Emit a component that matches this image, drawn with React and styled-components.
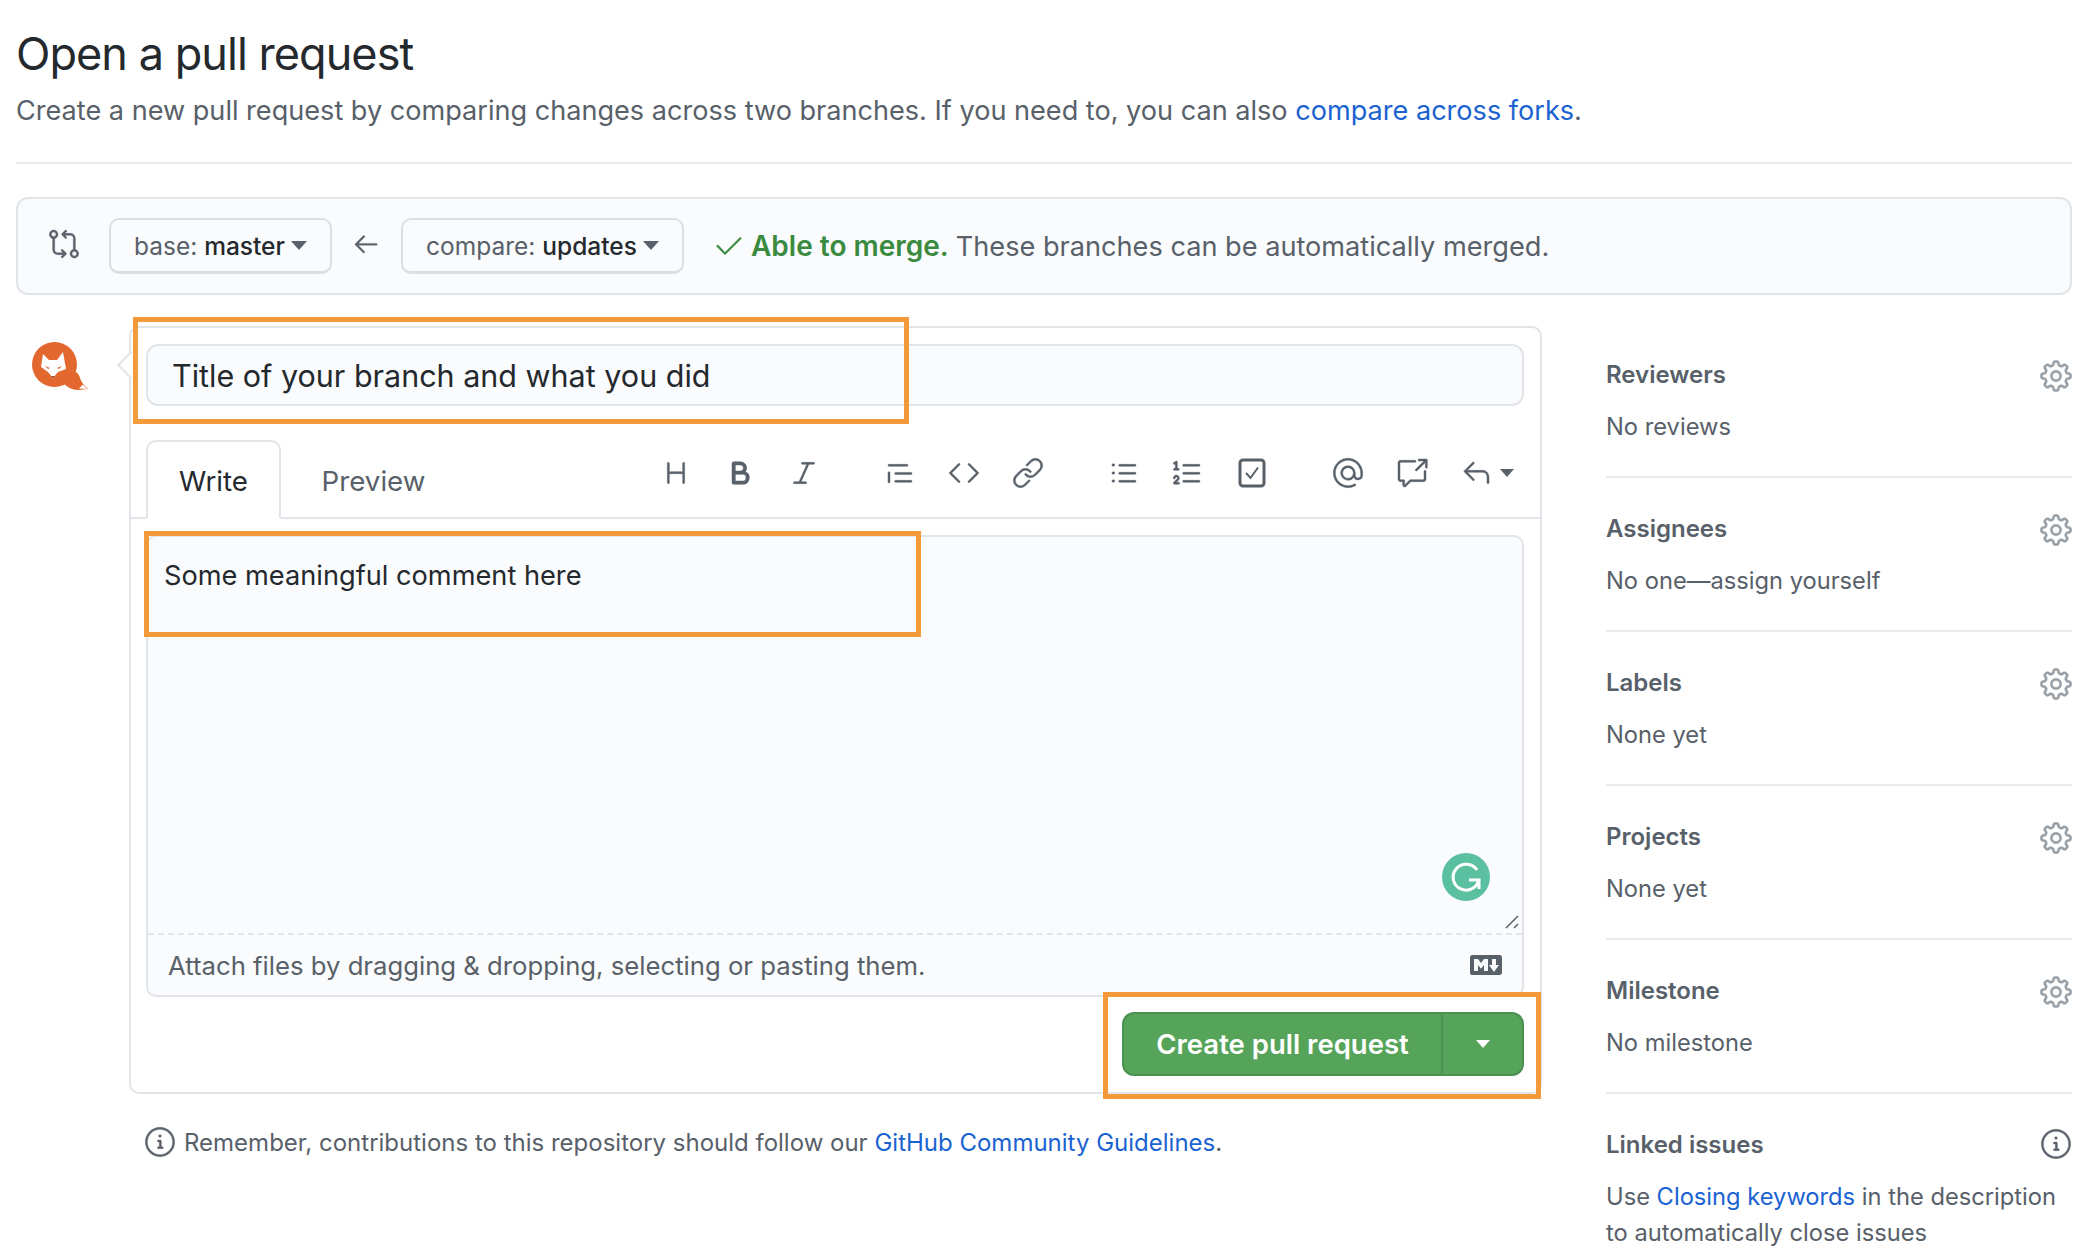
import React from "react";
import styled, { createGlobalStyle } from "styled-components";
import {
  GoHeading, GoBold, GoItalic, GoQuote, GoCode, GoLink, GoListUnordered, GoListOrdered,
  GoMention, GoCrossReference, GoReply, GoGear, GoInfo, GoGitCompare, GoCheck,
  GoArrowLeft,
} from "react-icons/go";

const Global = createGlobalStyle`
  html, body { margin: 0; padding: 0; background: #fff; }
  body { width: 2092px; height: 1256px; overflow: hidden; font-family: Inter, "Liberation Sans", sans-serif; color: #24292e; }
  * { box-sizing: border-box; }
`;
const Page = styled.div`position: relative; width: 2092px; height: 1256px; padding: 24px 20px 0 16px; overflow: hidden;`;
const Heading = styled.h1`margin: 0; font-size: 45px; line-height: 60px; font-weight: 400; letter-spacing: -0.95px; color: #24292e;`;
const Sub = styled.p`margin: 9px 0 0; font-size: 27.1px; line-height: 36px; color: #586069;`;
const A = styled.a`color: #1b62d1; text-decoration: none;`;
const Rule = styled.hr`margin: 33px 0 0; border: 0; height: 2px; background: #e8eaed;`;
const Bar = styled.div`
  margin-top: 33px; height: 98px; display: flex; align-items: center; padding: 0 0 0 30px;
  background: #fafbfc; border: 2px solid #e1e4e8; border-radius: 12px;
`;
const CompareIcon = styled(GoGitCompare)`font-size: 32px; color: #586069; margin-right: 29px; margin-top: -4px; stroke: currentColor; stroke-width: .3;`;
const Branch = styled.div`
  height: 56px; width: ${p => p.$w}px; display: flex; align-items: center; justify-content: center; gap: 6px;
  border: 2px solid #dcdfe3; border-bottom-width: 3px; border-radius: 10px; background: #fafbfc;
  font-size: 24.5px; color: #586069; white-space: nowrap;
  b { font-weight: 500; color: #24292e; }
`;
const Caret = styled.span`
  display: inline-block; width: 0; height: 0; margin-left: ${p => p.$ml ?? 0}px;
  border-left: ${p => p.$s}px solid transparent; border-right: ${p => p.$s}px solid transparent;
  border-top: ${p => p.$s + 1}px solid ${p => p.$c};
`;
const Arrow = styled(GoArrowLeft)`font-size: 30px; color: #586069; margin: -4px 20px 0 19px; stroke: currentColor; stroke-width: .3;`;
const Merge = styled.div`margin-left: 29px; display: flex; align-items: center; font-size: 27.15px; color: #586069; white-space: nowrap;`;
const MergeCheck = styled(GoCheck)`font-size: 32px; color: #3a8a3f; margin-right: 6px; stroke: currentColor; stroke-width: .2;`;
const Able = styled.b`font-weight: 600; font-size: 28px; color: #3a8a3f; margin-right: 7px;`;
const Main = styled.div`margin-top: 31px; display: flex; align-items: flex-start;`;
const AvatarCol = styled.div`width: 113px; flex: none; padding: 15px 0 0 15px;`;
const Form = styled.div`
  position: relative; width: 1413px; height: 768px; flex: none; border: 2px solid #e1e4e8; border-radius: 10px; padding: 16px 16px 0 15px; background: #fff;
  &::before { content: ""; position: absolute; left: -10px; top: 27px; width: 18px; height: 18px; background: #fff; border-left: 2px solid #e1e4e8; border-bottom: 2px solid #e1e4e8; transform: rotate(45deg); }
`;
const TitleBox = styled.div`
  position: relative; height: 62px; border: 2px solid #e1e4e8; border-radius: 12px; background: #fafbfc; padding: 0 24px;
  font-size: 30.5px; line-height: 60px; color: #24292e;
`;
const TabRow = styled.div`
  display: flex; align-items: flex-end; height: 87px; margin: 26px -16px 0 -15px; padding: 0 16px 0 15px; border-bottom: 2px solid #e1e4e8;
  position: relative;
`;
const Tab = styled.div`
  flex: none; width: ${p => p.$w}px; height: 79px; padding-top: 3px; display: flex; align-items: center; justify-content: center; font-size: 27.7px; margin-bottom: -2px;
  color: ${p => p.$active ? "#24292e" : "#586069"};
  ${p => p.$active ? "border: 2px solid #e1e4e8; border-bottom-color: #fff; border-radius: 10px 10px 0 0; background: #fff;" : ""}
`;
const Tools = styled.div`
  flex: 1; display: flex; align-self: flex-start; padding: 14px 0 0 194px; align-items: center; height: 68px; color: #586069; font-size: 32px;
  svg { stroke: currentColor; stroke-width: .35; flex: none; }
`;
const ToolGroup = styled.div`display: flex; gap: 32px; margin-right: ${p => p.$mr ?? 64}px; align-items: center;`;
const ReplyCaret = styled(Caret)`margin-left: -24px;`;
const Editor = styled.div`
  position: relative; margin-top: 16px; height: 462px; display: flex; flex-direction: column; border: 2px solid #e1e4e8; border-radius: 10px; background: #fafbfc;
`;
const TextArea = styled.div`flex: 1; padding: 21px 16px; font-size: 27.2px; line-height: 36px; color: #24292e; position: relative; border-bottom: 2px dashed #e1e4e8;`;
const EditorFoot = styled.div`height: 60px; display: flex; align-items: center; justify-content: space-between; padding: 0 20px 0 20px; font-size: 25.7px; color: #586069;`;
const Grammarly = styled.svg`position: absolute; right: 32px; top: 316px; width: 48px; height: 48px;`;
const Resize = styled.svg`position: absolute; right: 3px; bottom: 4px; width: 14px; height: 14px;`;
const Actions = styled.div`display: flex; justify-content: flex-end; margin-top: 15px;`;
const SplitButton = styled.div`display: flex; height: 64px; width: 402px; background: #55a45a; border: 2px solid #4b9150; border-radius: 12px; color: #fff; font-size: 27.5px; font-weight: 600;`;
const ButtonMain = styled.div`width: 319px; display: flex; align-items: center; justify-content: center; border-right: 2px solid #4b9150;`;
const ButtonCaret = styled.div`flex: 1; display: flex; align-items: center; justify-content: center;`;
const Note = styled.div`margin: 32px 0 0 15px; display: flex; align-items: center; gap: 8px; font-size: 24px; color: #586069; white-space: nowrap;`;
const NoteIcon = styled(GoInfo)`font-size: 32px; color: #586069; stroke: currentColor; stroke-width: .3;`;
const Aside = styled.aside`width: 466px; margin-left: 64px; flex: none; margin-top: -2px;`;
const Section = styled.div`padding: 34px 0 ${p => p.$last ? 0 : 31}px; border-bottom: ${p => p.$last ? "none" : "2px solid #e8eaed"};`;
const SecHead = styled.div`display: flex; align-items: center; justify-content: space-between; height: 32px; font-size: 24px; font-weight: 600; color: #586069;`;
const SecGear = styled(GoGear)`font-size: 34px; color: #959da5; margin: 3px -1px 0 0; stroke: currentColor; stroke-width: .35;`;
const SecInfo = styled(GoInfo)`font-size: 32px; color: #586069; stroke: currentColor; stroke-width: .3;`;
const SecBody = styled.div`margin-top: 19px; font-size: 23.7px; line-height: 36px; color: #586069;`;
const Highlight = styled.div`
  position: absolute; left: ${p => p.$x}px; top: ${p => p.$y}px; width: ${p => p.$w}px; height: ${p => p.$h}px;
  border: 5px solid #f59a3a; pointer-events: none;
`;
const FoxSvg = styled.svg`display: block; width: 60px; height: 52px; overflow: visible;`;

const Fox = () => (
  <FoxSvg viewBox="0 0 60 52">
    <circle cx="23.5" cy="23.5" r="22.5" fill="#e2682f" />
    <path d="M10 26 L12 13 L18 19 L26 19 L32 11 L35 28 L27 31 L22 37 L17 31 Z" fill="#fff" />
    <path d="M14 25 l5 2 l-2 1z M31 25 l-5 2 l2 1z" fill="#e2682f" />
    <path d="M20.5 35 h3 l-1.5 2z" fill="#7a3a20" />
    <path d="M29 31 C38 27 47 29 49 37 C50 41 53 44 57 48 L48 49 C42 49 38 47 34 44 Z" fill="#e2682f" />
    <path d="M48 47.5 L52 43.5 L56 48 Z" fill="#fff" />
  </FoxSvg>
);

const MarkdownIcon = () => (
  <svg width="32" height="32" viewBox="0 0 16 16" fill="currentColor">
    <path d="M14.85 3H1.15C.52 3 0 3.52 0 4.15v7.69C0 12.48.52 13 1.15 13h13.69c.64 0 1.15-.52 1.15-1.15v-7.7C16 3.52 15.48 3 14.85 3zM9 11H7V8L5.5 9.92 4 8v3H2V5h2l1.5 2L7 5h2v6zm2.99.5L9.5 8H11V5h2v3h1.5l-2.51 3.5z" />
  </svg>
);

const TaskIcon = () => (
  <svg width="32" height="32" viewBox="0 0 32 32" fill="none">
    <rect x="4" y="3" width="24" height="26" rx="3" stroke="#586069" strokeWidth="3" />
    <path d="M10 16 L14.5 21 L22 10.5" stroke="#586069" strokeWidth="2" />
  </svg>
);

const sections = [
  ["Reviewers", "No reviews"],
  ["Assignees", "No one—assign yourself"],
  ["Labels", "None yet"],
  ["Projects", "None yet"],
  ["Milestone", "No milestone"],
];

export default function App() {
  return (
    <Page>
      <Global />
      <Heading>Open a pull request</Heading>
      <Sub>Create a new pull request by comparing changes across two branches. If you need to, you can also <A>compare across forks</A>.</Sub>
      <Rule />
      <Bar>
        <CompareIcon />
        <Branch $w={223}><span>base: <b>master</b></span><Caret $s={8} $c="#586069" /></Branch>
        <Arrow />
        <Branch $w={283}><span>compare: <b>updates</b></span><Caret $s={8} $c="#586069" /></Branch>
        <Merge><MergeCheck /><Able>Able to merge.</Able> These branches can be automatically merged.</Merge>
      </Bar>
      <Main>
        <AvatarCol><Fox /></AvatarCol>
        <div>
          <Form>
            <TitleBox>Title of your branch and what you did</TitleBox>
            <TabRow>
              <Tab $w={135} $active>Write</Tab>
              <Tab $w={185}>Preview</Tab>
              <Tools>
                <ToolGroup><GoHeading /><GoBold /><GoItalic /></ToolGroup>
                <ToolGroup><GoQuote /><GoCode /><GoLink /></ToolGroup>
                <ToolGroup><GoListUnordered /><GoListOrdered /><TaskIcon /></ToolGroup>
                <ToolGroup $mr={0}><GoMention /><GoCrossReference /><GoReply /><ReplyCaret $s={7} $c="#586069" /></ToolGroup>
              </Tools>
            </TabRow>
            <Editor>
              <TextArea>
                Some meaningful comment here
                <Grammarly viewBox="0 0 48 48">
                  <circle cx="24" cy="24" r="24" fill="#5bc0a0" />
                  <path d="M35 17 A13 13 0 1 0 37 26" fill="none" stroke="#fff" strokeWidth="3" />
                  <path d="M27 27 H37 V36" fill="none" stroke="#fff" strokeWidth="3" />
                </Grammarly>
                <Resize viewBox="0 0 14 14">
                  <path d="M1 13 L13 1 M9 13 L13 9" stroke="#586069" strokeWidth="1.5" />
                </Resize>
              </TextArea>
              <EditorFoot>
                <span>Attach files by dragging &amp; dropping, selecting or pasting them.</span>
                <MarkdownIcon />
              </EditorFoot>
            </Editor>
            <Actions>
              <SplitButton>
                <ButtonMain>Create pull request</ButtonMain>
                <ButtonCaret><Caret $s={7} $c="#fff" /></ButtonCaret>
              </SplitButton>
            </Actions>
          </Form>
          <Note><NoteIcon /><span>Remember, contributions to this repository should follow our <A>GitHub Community Guidelines</A>.</span></Note>
        </div>
        <Aside>
          {sections.map(([t, b]) => (
            <Section key={t}>
              <SecHead>{t}<SecGear /></SecHead>
              <SecBody>{b}</SecBody>
            </Section>
          ))}
          <Section $last>
            <SecHead>Linked issues<SecInfo /></SecHead>
            <SecBody>Use <A>Closing keywords</A> in the description to automatically close issues</SecBody>
          </Section>
        </Aside>
      </Main>
      <Highlight $x={133} $y={317} $w={776} $h={107} />
      <Highlight $x={144} $y={531} $w={777} $h={106} />
      <Highlight $x={1103} $y={992} $w={438} $h={107} />
    </Page>
  );
}
